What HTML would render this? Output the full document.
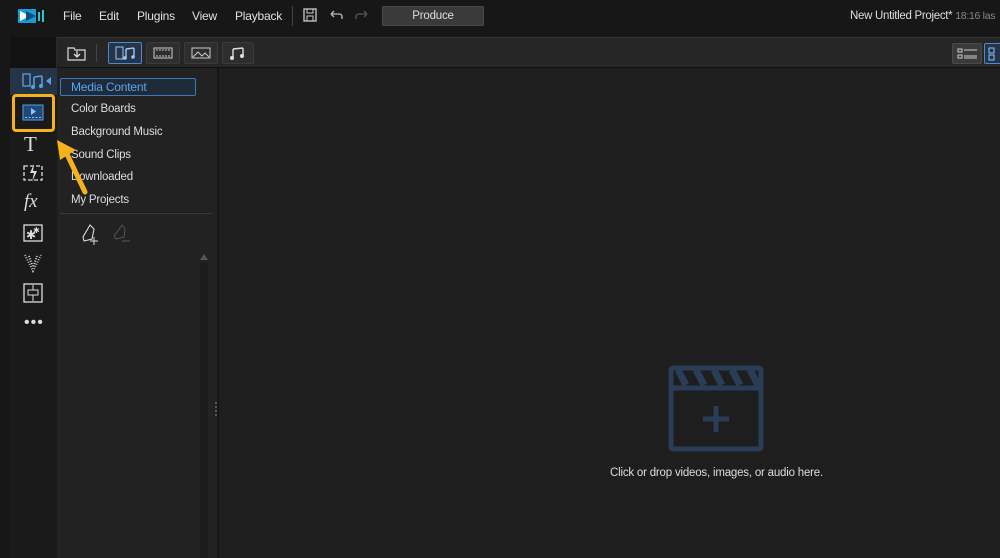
<!DOCTYPE html>
<html><head><meta charset="utf-8"><style>
*{margin:0;padding:0;box-sizing:border-box}
body{width:1000px;height:558px;background:#171717;font-family:"Liberation Sans",sans-serif;color:#ddd;position:relative;overflow:hidden;font-size:11.5px;letter-spacing:-0.2px}
.a{position:absolute;white-space:nowrap}
.menu span{position:absolute;top:9px;font-size:12px;color:#e0e0e0}
</style></head><body>
<svg class="a" style="left:18px;top:8px" width="28" height="16"><rect x="0" y="1" width="18" height="14" fill="#1a9ad6"/><path d="M2 3 L12 8 L2 13 Z" fill="#fff"/><path d="M8 3 L18 8 L8 13Z" fill="#0f4f7a"/><rect x="20" y="4" width="2" height="9" fill="#2ec4c8"/><rect x="24" y="2" width="2" height="12" fill="#2ec4c8"/></svg>
<div class="menu"><span style="left:63px">File</span><span style="left:99px">Edit</span><span style="left:137px">Plugins</span><span style="left:192px">View</span><span style="left:235px">Playback</span></div>
<div class="a" style="left:292px;top:6px;width:1px;height:20px;background:#444"></div>
<svg class="a" style="left:303px;top:8px" width="14" height="14"><rect x="1" y="1" width="12" height="12" fill="none" stroke="#ccc" stroke-width="1.3"/><rect x="4" y="1" width="6" height="4" fill="none" stroke="#ccc"/><rect x="4" y="8" width="6" height="5" fill="none" stroke="#ccc"/></svg>
<svg class="a" style="left:329px;top:9px" width="14" height="12"><path d="M2 5 H10 Q13 5 13 8 V10 M2 5 L5 2 M2 5 L5 8" fill="none" stroke="#bbb" stroke-width="1.3"/></svg>
<svg class="a" style="left:355px;top:9px" width="14" height="12"><path d="M12 5 H4 Q1 5 1 8 V10 M12 5 L9 2 M12 5 L9 8" fill="none" stroke="#555" stroke-width="1.3"/></svg>
<div class="a" style="left:382px;top:6px;width:102px;height:20px;background:#3a3a3a;border:1px solid #4a4a4a;border-radius:2px;text-align:center;line-height:18px;color:#ddd">Produce</div>
<div class="a" style="left:850px;top:10px;font-size:11.5px;color:#ddd;letter-spacing:-0.3px">New Untitled Project* <span style="color:#888;font-size:10.5px">18:16 las</span></div>
<div class="a" style="left:10px;top:37px;width:47px;height:521px;background:#121212;border-right:1px solid #2a2a2a"></div>
<div class="a" style="left:10px;top:68px;width:47px;height:490px;background:#1a1a1a"></div>
<div class="a" style="left:10px;top:68px;width:47px;height:27px;background:#253447"></div>
<svg class="a" style="left:22px;top:73px" width="36" height="18"><rect x="1" y="1" width="7" height="12" fill="none" stroke="#5aa0e0" stroke-width="1.3"/><path d="M12 4 V14 M20 3 V13 M12 4 L20 3" stroke="#5aa0e0" stroke-width="1.5" fill="none"/><circle cx="11" cy="14" r="2" fill="#5aa0e0"/><circle cx="19" cy="13" r="2" fill="#5aa0e0"/><path d="M29 4 L24 8 L29 12Z" fill="#5aa0e0"/></svg>
<div class="a" style="left:12px;top:94px;width:43px;height:38px;border:3px solid #f5b21c;border-radius:4px"></div>
<svg class="a" style="left:22px;top:104px" width="22" height="18"><rect x="1" y="1" width="20" height="15" fill="#1f4a78" stroke="#5aa0e0"/><path d="M9 4 L14 7.5 L9 11Z" fill="#8cc4ff"/><path d="M3 13.5 H19" stroke="#8cc4ff" stroke-dasharray="2 1.5"/></svg>
<div class="a" style="left:24px;top:132px;font-family:'Liberation Serif',serif;font-size:21px;color:#ddd">T</div>
<svg class="a" style="left:23px;top:163px" width="20" height="20"><rect x="1" y="3" width="18" height="14" fill="none" stroke="#ddd" stroke-width="1.3" stroke-dasharray="4 2"/><path d="M11 1 L7 10 H11 L9 19 L14 8 H10Z" fill="#ddd"/></svg>
<div class="a" style="left:24px;top:191px;font-family:'Liberation Serif',serif;font-style:italic;font-size:19px;color:#ddd">fx</div>
<svg class="a" style="left:23px;top:224px" width="20" height="18"><rect x="1" y="1" width="18" height="16" fill="none" stroke="#ddd" stroke-width="1.3"/><text x="3" y="15" font-size="12" fill="#ddd">✱</text><text x="10" y="9" font-size="8" fill="#ddd">✱</text></svg>
<svg class="a" style="left:23px;top:253px" width="20" height="20"><path d="M2 2 L10 18 L18 2" fill="none" stroke="#bbb" stroke-dasharray="1 1.5" stroke-width="2"/><path d="M6 3 L10 14 L14 3" fill="none" stroke="#ddd" stroke-dasharray="1 1.5" stroke-width="2"/></svg>
<svg class="a" style="left:23px;top:283px" width="20" height="20"><rect x="1" y="1" width="18" height="18" fill="none" stroke="#ddd" stroke-width="1.3"/><rect x="5" y="7" width="10" height="5" fill="none" stroke="#ddd"/><path d="M10 2 V7 M10 12 V18" stroke="#ddd"/></svg>
<div class="a" style="left:24px;top:314px;font-size:16px;color:#ddd;letter-spacing:1px">•••</div>
<div class="a" style="left:57px;top:37px;width:943px;height:31px;background:#262626;border-top:1px solid #333;border-bottom:1px solid #111"></div>
<svg class="a" style="left:67px;top:45px" width="20" height="16"><path d="M1 3 H7 L8 5 H18 V15 H1Z" fill="none" stroke="#ddd" stroke-width="1.2"/><path d="M10 6 V12 M7 9 L10 12 L13 9" stroke="#ddd" fill="none" stroke-width="1.3"/></svg>
<div class="a" style="left:96px;top:44px;width:1px;height:18px;background:#444"></div>
<div class="a" style="left:108px;top:42px;width:34px;height:22px;background:#253447;border:1px solid #4b8ad0;border-radius:2px"></div>
<svg class="a" style="left:115px;top:46px" width="22" height="14"><rect x="1" y="1" width="7" height="12" fill="none" stroke="#9cc8f0"/><path d="M11 3 V12 M19 2 V11 M11 3 L19 2" stroke="#9cc8f0" stroke-width="1.4" fill="none"/><circle cx="10" cy="12" r="1.8" fill="#9cc8f0"/><circle cx="18" cy="11" r="1.8" fill="#9cc8f0"/></svg>
<div class="a" style="left:146px;top:42px;width:34px;height:22px;background:#2e2e2e;border:1px solid #3a3a3a;border-radius:2px"></div>
<svg class="a" style="left:153px;top:47px" width="20" height="12"><rect x="1" y="1" width="18" height="10" fill="none" stroke="#ccc"/><path d="M3 3 H17 M3 9 H17" stroke="#ccc" stroke-dasharray="2 1"/></svg>
<div class="a" style="left:184px;top:42px;width:34px;height:22px;background:#2e2e2e;border:1px solid #3a3a3a;border-radius:2px"></div>
<svg class="a" style="left:191px;top:47px" width="20" height="12"><rect x="1" y="1" width="18" height="10" fill="none" stroke="#ccc"/><path d="M2 10 L7 5 L11 9 L14 6 L18 10" stroke="#ccc" fill="none"/></svg>
<div class="a" style="left:222px;top:42px;width:32px;height:22px;background:#2e2e2e;border:1px solid #3a3a3a;border-radius:2px"></div>
<svg class="a" style="left:229px;top:46px" width="18" height="14"><path d="M4 3 V12 M14 2 V10 M4 3 L14 2" stroke="#ddd" stroke-width="1.4" fill="none"/><circle cx="3" cy="12" r="2" fill="#ddd"/><circle cx="13" cy="10" r="2" fill="#ddd"/></svg>
<div class="a" style="left:952px;top:43px;width:30px;height:21px;background:#3a3a3a;border:1px solid #4a4a4a;border-radius:2px"></div>
<svg class="a" style="left:957px;top:47px" width="22" height="14"><rect x="1" y="2" width="4" height="3" fill="none" stroke="#ccc"/><rect x="1" y="8" width="4" height="3" fill="none" stroke="#ccc"/><path d="M7 3 H20 M7 9 H20 M7 11 H20" stroke="#ccc"/></svg>
<div class="a" style="left:984px;top:43px;width:20px;height:21px;background:#253447;border:1px solid #4b8ad0;border-radius:2px"></div>
<svg class="a" style="left:988px;top:47px" width="12" height="14"><rect x="1" y="1" width="5" height="5" fill="none" stroke="#8cc4ff"/><rect x="1" y="8" width="5" height="5" fill="none" stroke="#8cc4ff"/></svg>
<div class="a" style="left:57px;top:68px;width:160px;height:490px;background:#222"></div>
<div class="a" style="left:60px;top:78px;width:136px;height:18px;border:1px solid #3f7ab8;background:#1f2b38;border-radius:2px;color:#5aa6f0;padding-left:10px;line-height:17px;font-size:12px">Media Content</div>
<div class="a" style="left:71px;top:103px;color:#ddd">Color Boards</div>
<div class="a" style="left:71px;top:126px;color:#ddd">Background Music</div>
<div class="a" style="left:71px;top:149px;color:#ddd">Sound Clips</div>
<div class="a" style="left:71px;top:171px;color:#ddd">Downloaded</div>
<div class="a" style="left:71px;top:194px;color:#ddd">My Projects</div>
<div class="a" style="left:60px;top:213px;width:152px;height:1px;background:#3a3a3a"></div>
<svg class="a" style="left:80px;top:223px" width="50" height="24"><path d="M10 2 L14 6 L12 16 L4 18 L3 14 Z" fill="none" stroke="#ddd" stroke-width="1.1"/><path d="M14 14 V22 M10 18 H18" stroke="#ddd"/><path d="M42 2 L45 6 L44 14 L36 16 L34 13 Z" fill="none" stroke="#555"/><path d="M42 18 H50" stroke="#555"/></svg>
<svg class="a" style="left:199px;top:253px" width="10" height="8"><path d="M1 7 L5 1 L9 7Z" fill="#555"/></svg>
<div class="a" style="left:200px;top:263px;width:8px;height:295px;background:#1c1c1c"></div>
<svg class="a" style="left:52px;top:136px" width="40" height="60"><path d="M33 56 L14 16" stroke="#f5b21c" stroke-width="5" stroke-linecap="round"/><path d="M5 4 L24 14 L8 24Z" fill="#f5b21c"/></svg>
<div class="a" style="left:217px;top:68px;width:2px;height:490px;background:#161616"></div>
<div class="a" style="left:220px;top:214px;width:12px;height:24px;background:#2e3640;border-radius:2px"></div>
<svg class="a" style="left:222px;top:220px" width="8" height="12"><path d="M6 1 L2 6 L6 11" stroke="#5aa0e0" stroke-width="1.6" fill="none"/></svg>
<div class="a" style="left:215px;top:402px;width:2px;height:14px;border-left:2px dotted #555"></div>
<div class="a" style="left:219px;top:68px;width:781px;height:490px;background:#1e1e1e"></div>
<svg class="a" style="left:668px;top:365px" width="96" height="87"><rect x="3" y="3" width="90" height="81" rx="2" fill="none" stroke="#2a3d57" stroke-width="5"/><path d="M3 23 H93" stroke="#2a3d57" stroke-width="5"/><path d="M10 5 L18 20 M28 5 L36 20 M46 5 L54 20 M64 5 L72 20 M82 5 L90 20" stroke="#2a3d57" stroke-width="7"/><path d="M48 41 V67 M35 54 H61" stroke="#2a3d57" stroke-width="5"/></svg>
<div class="a" style="left:610px;top:467px;color:#ddd;font-size:11.5px;letter-spacing:-0.2px">Click or drop videos, images, or audio here.</div>
</body></html>
